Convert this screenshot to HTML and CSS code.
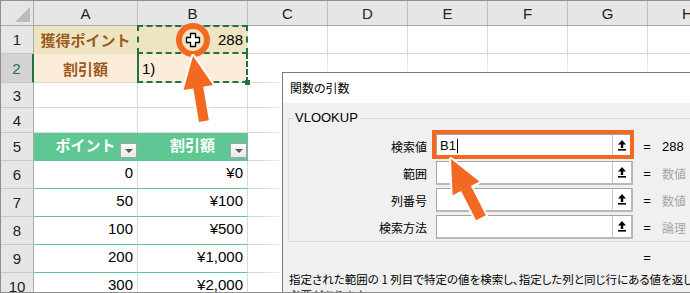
FILE: index.html
```html
<!DOCTYPE html>
<html lang="ja">
<head>
    <meta charset="UTF-8">
    <meta name="viewport" content="width=device-width, initial-scale=1.0">
    <title>VLOOKUP 関数の引数</title>
    <link rel="stylesheet" href="styles.css">
</head>
<body>
<div class="screen">
    <div class="sheet">
        <div class="corner"></div>
        <div class="colhead">A</div>
        <div class="colhead">B</div>
        <div class="colhead">C</div>
        <div class="colhead">D</div>
        <div class="colhead">E</div>
        <div class="colhead">F</div>
        <div class="colhead">G</div>
        <div class="colhead">H</div>

        <div class="rowhead">1</div>
        <div class="cell fill-gold label">獲得ポイント</div>
        <div class="cell fill-gold num ref">288</div>
        <div class="cell"></div><div class="cell"></div><div class="cell"></div>
        <div class="cell"></div><div class="cell"></div><div class="cell"></div>

        <div class="rowhead on">2</div>
        <div class="cell fill-peach label">割引額</div>
        <div class="cell fill-peach active">1)</div>
        <div class="cell"></div><div class="cell"></div><div class="cell"></div>
        <div class="cell"></div><div class="cell"></div><div class="cell"></div>

        <div class="rowhead">3</div>
        <div class="cell"></div><div class="cell"></div><div class="cell"></div><div class="cell"></div>
        <div class="cell"></div><div class="cell"></div><div class="cell"></div><div class="cell"></div>

        <div class="rowhead">4</div>
        <div class="cell"></div><div class="cell"></div><div class="cell"></div><div class="cell"></div>
        <div class="cell"></div><div class="cell"></div><div class="cell"></div><div class="cell"></div>

        <div class="rowhead">5</div>
        <div class="cell thead">ポイント<span class="filter"></span></div>
        <div class="cell thead">割引額<span class="filter"></span></div>
        <div class="cell"></div><div class="cell"></div><div class="cell"></div>
        <div class="cell"></div><div class="cell"></div><div class="cell"></div>

        <div class="rowhead">6</div>
        <div class="cell num trow">0</div>
        <div class="cell num trow">¥0</div>
        <div class="cell"></div><div class="cell"></div><div class="cell"></div>
        <div class="cell"></div><div class="cell"></div><div class="cell"></div>

        <div class="rowhead">7</div>
        <div class="cell num trow">50</div>
        <div class="cell num trow">¥100</div>
        <div class="cell"></div><div class="cell"></div><div class="cell"></div>
        <div class="cell"></div><div class="cell"></div><div class="cell"></div>

        <div class="rowhead">8</div>
        <div class="cell num trow">100</div>
        <div class="cell num trow">¥500</div>
        <div class="cell"></div><div class="cell"></div><div class="cell"></div>
        <div class="cell"></div><div class="cell"></div><div class="cell"></div>

        <div class="rowhead">9</div>
        <div class="cell num trow">200</div>
        <div class="cell num trow">¥1,000</div>
        <div class="cell"></div><div class="cell"></div><div class="cell"></div>
        <div class="cell"></div><div class="cell"></div><div class="cell"></div>

        <div class="rowhead">10</div>
        <div class="cell num trow">300</div>
        <div class="cell num trow">¥2,000</div>
        <div class="cell"></div><div class="cell"></div><div class="cell"></div>
        <div class="cell"></div><div class="cell"></div><div class="cell"></div>
    </div>

    <section class="dialog">
        <header class="dialog-title">関数の引数</header>
        <div class="dialog-body">
            <fieldset class="args">
                <legend>VLOOKUP</legend>
                <div class="arg">
                    <label class="arg-name">検索値</label>
                    <div class="arg-box"><span class="arg-text">B1</span><span class="caret"></span>
                        <span class="pick"><svg width="8" height="11" viewBox="0 0 8 11"><path d="M4 0 8 4.5H5.2V8H2.8V4.5H0Z" fill="#000"/><rect x="0" y="9" width="8" height="1.6" fill="#000"/></svg></span>
                    </div>
                    <span class="arg-eq">=</span>
                    <span class="arg-val">288</span>
                </div>
                <div class="arg">
                    <label class="arg-name">範囲</label>
                    <div class="arg-box"><span class="arg-text"></span>
                        <span class="pick"><svg width="8" height="11" viewBox="0 0 8 11"><path d="M4 0 8 4.5H5.2V8H2.8V4.5H0Z" fill="#000"/><rect x="0" y="9" width="8" height="1.6" fill="#000"/></svg></span>
                    </div>
                    <span class="arg-eq">=</span>
                    <span class="arg-val muted">数値</span>
                </div>
                <div class="arg">
                    <label class="arg-name">列番号</label>
                    <div class="arg-box"><span class="arg-text"></span>
                        <span class="pick"><svg width="8" height="11" viewBox="0 0 8 11"><path d="M4 0 8 4.5H5.2V8H2.8V4.5H0Z" fill="#000"/><rect x="0" y="9" width="8" height="1.6" fill="#000"/></svg></span>
                    </div>
                    <span class="arg-eq">=</span>
                    <span class="arg-val muted">数値</span>
                </div>
                <div class="arg">
                    <label class="arg-name">検索方法</label>
                    <div class="arg-box"><span class="arg-text"></span>
                        <span class="pick"><svg width="8" height="11" viewBox="0 0 8 11"><path d="M4 0 8 4.5H5.2V8H2.8V4.5H0Z" fill="#000"/><rect x="0" y="9" width="8" height="1.6" fill="#000"/></svg></span>
                    </div>
                    <span class="arg-eq">=</span>
                    <span class="arg-val muted">論理</span>
                </div>
            </fieldset>
            <div class="result"><span class="arg-eq">=</span></div>
            <p class="desc">指定された範囲の 1 列目で特定の値を検索し、指定した列と同じ行にある値を返します。テーブルは<br>必要があります。</p>
        </div>
    </section>

    <svg class="marks" width="690" height="293" viewBox="0 0 690 293">
        <circle cx="193" cy="40" r="14" fill="none" stroke="#f26a21" stroke-width="6"/>
        <path d="M190.5 33.5h5v4h4v5h-4v4h-5v-4h-4v-5h4z" fill="#fff" stroke="#000" stroke-width="1.3" stroke-linejoin="round"/>
        <polygon transform="translate(193 56) rotate(-9.5)" points="0,0 15,32 5,32 5,66 -5,66 -5,32 -15,32" fill="#f26a21" stroke="#fff" stroke-width="4" stroke-linejoin="round" paint-order="stroke"/>
        <rect x="434" y="132" width="198" height="25" fill="none" stroke="#f26a21" stroke-width="4"/>
        <polygon transform="translate(451 159) rotate(-27)" points="0,0 15,33 5.5,33 5.5,66 -5.5,66 -5.5,33 -15,33" fill="#f26a21" stroke="#fff" stroke-width="4" stroke-linejoin="round" paint-order="stroke"/>
    </svg>
</div>
</body>
</html>
```

FILE: styles.css
```css
* {
    box-sizing: border-box;
}
body {
    margin: 0;
    background: #fff;
    font-family: "Liberation Sans", "Noto Sans CJK JP", sans-serif;
    color: #000;
}
.screen {
    position: relative;
    width: 690px;
    height: 293px;
    overflow: hidden;
    border: 1px solid #8f8f8f;
    border-right: none;
    background: #fff;
}

/* sheet grid */
.sheet {
    display: grid;
    grid-template-columns: 33px 104px 110px repeat(6, 80px);
    grid-template-rows: 25px 28px 29px 25px 25px repeat(6, 28px);
}
.corner {
    position: relative;
    background: #e6e6e6;
    border-right: 1px solid #ababab;
    border-bottom: 1px solid #ababab;
}
.corner::after {
    content: "";
    position: absolute;
    right: 3px;
    bottom: 3px;
    border-left: 15px solid transparent;
    border-bottom: 15px solid #bcbcbc;
}
.colhead {
    display: flex;
    align-items: center;
    justify-content: center;
    background: #e6e6e6;
    border-right: 1px solid #c0c0c0;
    border-bottom: 1px solid #ababab;
    font-size: 15px;
    color: #222;
}
.rowhead {
    display: flex;
    align-items: center;
    justify-content: center;
    background: #e6e6e6;
    border-right: 1px solid #ababab;
    border-bottom: 1px solid #c8c8c8;
    font-size: 15px;
    color: #222;
}
.rowhead.on {
    background: #d3d3d3;
    color: #217346;
    border-right: 2px solid #217346;
}
.cell {
    position: relative;
    display: flex;
    align-items: center;
    padding: 0 4px;
    border-right: 1px solid #d9d9d9;
    border-bottom: 1px solid #d9d9d9;
    font-size: 15px;
}
.num {
    justify-content: flex-end;
}
.label {
    justify-content: center;
    font-family: "Noto Sans CJK JP", sans-serif;
    font-weight: bold;
    color: #9c5a1c;
}
.fill-gold {
    background: #eee4c2;
    border-color: #eee4c2;
}
.fill-peach {
    background: #fcecda;
    border-right-color: #fcecda;
}
.ref::after {
    content: "";
    position: absolute;
    top: -1px;
    left: -1px;
    right: -1px;
    bottom: -1px;
    border: 2px dashed #217346;
}
.active::after {
    content: "";
    position: absolute;
    top: -1px;
    left: -1px;
    right: -1px;
    bottom: -1px;
    border: 2px dashed #217346;
    border-left-style: solid;
    border-top: none;
}
.active::before {
    content: "";
    position: absolute;
    right: -3px;
    bottom: -3px;
    width: 5px;
    height: 5px;
    background: #217346;
    z-index: 1;
}

/* table */
.thead {
    justify-content: center;
    padding-bottom: 5px;
    background: #5fc794;
    border-color: #5fc794;
    font-family: "Noto Sans CJK JP", sans-serif;
    font-weight: bold;
    color: #fff;
}
.filter {
    position: absolute;
    right: 0;
    bottom: 2px;
    width: 17px;
    height: 15px;
    border: 1px solid #a6a6a6;
    background: linear-gradient(#fdfdfd, #e8e8e8);
}
.filter::after {
    content: "";
    position: absolute;
    left: 4px;
    top: 5px;
    border-left: 4px solid transparent;
    border-right: 4px solid transparent;
    border-top: 4px solid #5a5a5a;
}
.trow {
    padding-bottom: 5px;
    border-bottom-color: #5fc794;
}

/* dialog */
.dialog {
    position: absolute;
    left: 281px;
    top: 71px;
    width: 460px;
    height: 240px;
    border: 1px solid #7a7a7a;
    background: #f0f0f0;
    box-shadow: 0 0 14px 7px rgba(255, 255, 255, 0.9);
    font-family: "Noto Sans CJK JP", sans-serif;
    font-size: 12px;
}
.dialog-title {
    height: 30px;
    line-height: 30px;
    padding-left: 7px;
    background: #fff;
    font-feature-settings: "palt";
}
.args {
    margin: 7px 0 0 5px;
    padding: 8px 0 2px 0;
    min-width: 0;
    border: 1px solid #dcdcdc;
}
.args legend {
    margin-left: 4px;
    padding: 0 2px;
    line-height: 16px;
    font-family: "Liberation Sans", "Noto Sans CJK JP", sans-serif;
    font-size: 13px;
}
.arg {
    display: grid;
    grid-template-columns: 147px 197px 28px auto;
    align-items: center;
    height: 24px;
    margin-bottom: 3px;
}
.arg:last-child {
    margin-bottom: 0;
}
.arg-name {
    padding-right: 9px;
    text-align: right;
}
.arg-box {
    display: flex;
    align-items: center;
    height: 24px;
    background: #fff;
    border: 1px solid #a5a5a5;
    border-right: 2px solid #b8b8b8;
    border-bottom: 2px solid #b8b8b8;
}
.arg-text {
    flex: none;
    padding-left: 3px;
    font-family: "Liberation Sans", sans-serif;
    font-size: 13px;
}
.caret {
    width: 1px;
    height: 14px;
    margin-left: 1px;
    background: #000;
}
.pick {
    display: flex;
    align-items: center;
    justify-content: center;
    width: 19px;
    height: 100%;
    margin-left: auto;
    border-left: 1px solid #c6c6c6;
    background: #fff;
}
.arg-eq {
    text-align: center;
    font-family: "Liberation Sans", sans-serif;
    font-size: 13px;
}
.arg-val {
    padding-left: 1px;
    font-family: "Liberation Sans", "Noto Sans CJK JP", sans-serif;
    font-size: 13px;
}
.muted {
    color: #a8a8a8;
    font-size: 12px;
}
.result {
    display: grid;
    grid-template-columns: 147px 197px 28px;
    margin: 8px 0 0 6px;
    line-height: 16px;
}
.result .arg-eq {
    grid-column: 3;
}
.desc {
    margin: 5px 0 0 6px;
    font-size: 11.5px;
    line-height: 16px;
    white-space: nowrap;
    font-feature-settings: "palt";
}

/* annotations */
.marks {
    position: absolute;
    left: -1px;
    top: -1px;
    z-index: 5;
}
```
